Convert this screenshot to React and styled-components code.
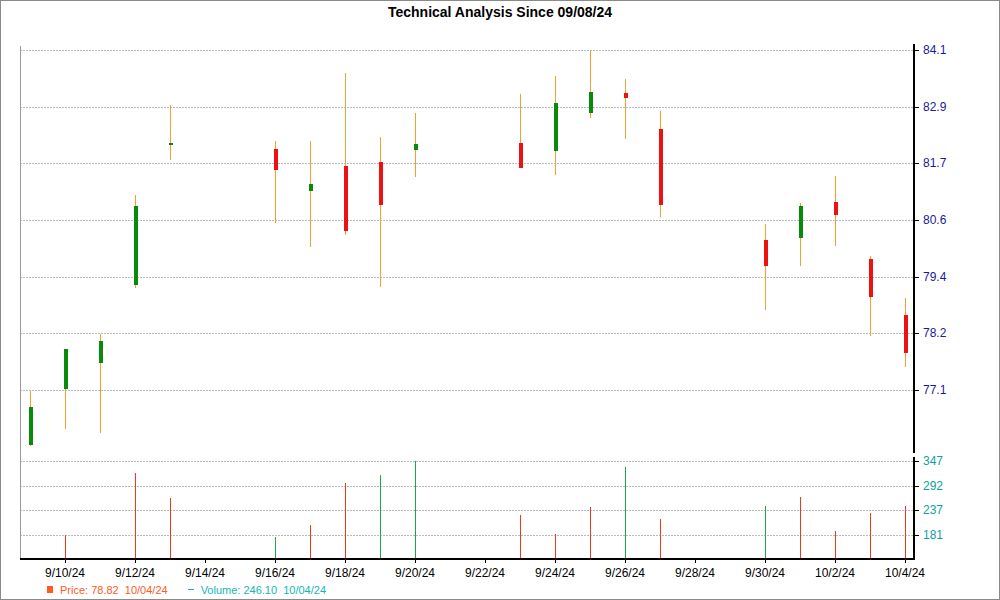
import React from "react";
import styled, { createGlobalStyle } from "styled-components";

const Global = createGlobalStyle`
  body { margin: 0; background: #fff; font-family: "Liberation Sans", Arial, sans-serif; }
`;

const Frame = styled.div`
  width: 1000px;
  height: 600px;
  box-sizing: border-box;
  border: 1px solid #8a8a8a;
  display: flex;
  flex-direction: column;
`;

const Title = styled.div`
  height: 20px;
  display: flex;
  align-items: center;
  justify-content: center;
  font-size: 14px;
  font-weight: bold;
  color: #000;
  padding-top: 1px;
`;

const Chart = styled.svg`
  display: block;
  width: 998px;
  height: 558px;
`;

const Legend = styled.div`
  height: 19px;
  display: flex;
  align-items: center;
  gap: 20px;
  padding-left: 46px;
  font-size: 11px;
`;

const LegendItem = styled.span`
  color: ${(p) => p.color};
  display: flex;
  align-items: center;
  gap: 7px;
`;

const Swatch = styled.span`
  width: 6px;
  height: 7px;
  background: #ff5a1f;
`;

const Dash = styled.span`
  width: 6px;
  height: 1px;
  background: #13b5b5;
`;

const UP = "#0a8a0a";
const DOWN = "#ee1111";
const WICK = "#f0a030";

const candles = [
  [30, 390, 445, 406, 444, UP],
  [65, 348, 428, 348, 388, UP],
  [100, 333, 432, 340, 362, UP],
  [135, 194, 287, 205, 284, UP],
  [170, 104, 159, 142, 144, UP],
  [275, 140, 222, 148, 169, DOWN],
  [310, 140, 246, 183, 190, UP],
  [345, 72, 234, 165, 230, DOWN],
  [380, 136, 286, 161, 204, DOWN],
  [415, 112, 176, 143, 149, UP],
  [520, 93, 167, 142, 167, DOWN],
  [555, 75, 174, 102, 150, UP],
  [590, 49, 117, 91, 112, UP],
  [625, 78, 138, 92, 97, DOWN],
  [660, 110, 216, 128, 204, DOWN],
  [765, 223, 309, 239, 265, DOWN],
  [800, 202, 265, 205, 237, UP],
  [835, 175, 245, 201, 214, DOWN],
  [870, 255, 335, 258, 296, DOWN],
  [905, 297, 366, 314, 352, DOWN],
];

const VUP = "#1aa84a";
const VDOWN = "#f03a1a";
const volumes = [
  [65, 534, VDOWN], [135, 472, VDOWN], [170, 497, VDOWN], [275, 536, VUP],
  [310, 524, VDOWN], [345, 482, VDOWN], [380, 474, VUP], [415, 460, VUP],
  [520, 514, VDOWN], [555, 533, VDOWN], [590, 506, VDOWN], [625, 466, VUP],
  [660, 518, VDOWN], [765, 505, VUP], [800, 496, VDOWN], [835, 530, VDOWN],
  [870, 512, VDOWN], [905, 505, VDOWN],
];

const priceTicks = [[84.1, 49], [82.9, 106], [81.7, 162], [80.6, 219], [79.4, 276], [78.2, 332], [77.1, 389]];
const volTicks = [[347, 460], [292, 485], [237, 509], [181, 534]];
const dates = ["9/10/24", "9/12/24", "9/14/24", "9/16/24", "9/18/24", "9/20/24", "9/22/24", "9/24/24", "9/26/24", "9/28/24", "9/30/24", "10/2/24", "10/4/24"];

export default function App() {
  return (
    <>
      <Global />
      <Frame>
        <Title>Technical Analysis Since 09/08/24</Title>
        <Chart viewBox="1 21 998 558" shapeRendering="crispEdges">
          {priceTicks.map(([v, y]) => (
            <g key={v}>
              <line x1="20" x2="914" y1={y} y2={y} stroke="#bbb" strokeDasharray="2 1" />
              <line x1="914" x2="919" y1={y} y2={y} stroke="#000" />
              <text x="923" y={y + 4} fontSize="12" fill="#1a1aa0" fontFamily="Liberation Sans">{v.toFixed(1)}</text>
            </g>
          ))}
          {volTicks.map(([v, y]) => (
            <g key={v}>
              <line x1="20" x2="914" y1={y} y2={y} stroke="#bbb" strokeDasharray="2 1" />
              <line x1="914" x2="919" y1={y} y2={y} stroke="#000" />
              <text x="923" y={y + 4} fontSize="12" fill="#10a0a0" fontFamily="Liberation Sans">{v}</text>
            </g>
          ))}
          <line x1="20.5" x2="20.5" y1="45" y2="557" stroke="#999" />
          <line x1="914" x2="914" y1="43" y2="452" stroke="#000" strokeWidth="2" />
          <line x1="914" x2="914" y1="456" y2="557" stroke="#000" strokeWidth="2" />
          {candles.map(([x, wt, wb, bt, bb, c]) => (
            <g key={x}>
              <line x1={x + 0.5} x2={x + 0.5} y1={wt} y2={wb} stroke={WICK} />
              <rect x={x - 1} y={bt} width="4" height={Math.max(bb - bt, 2)} fill={c} />
            </g>
          ))}
          {volumes.map(([x, y, c]) => (
            <rect key={x} x={x} y={y} width="1" height={557 - y} fill={c} />
          ))}
          <line x1="20" x2="915" y1="557.5" y2="557.5" stroke="#000" strokeWidth="2" />
          {dates.map((d, i) => (
            <g key={d}>
              <line x1={65.5 + i * 70} x2={65.5 + i * 70} y1="557" y2="562" stroke="#000" />
              <text x={65 + i * 70} y="576" fontSize="12" textAnchor="middle" fill="#000" fontFamily="Liberation Sans">{d}</text>
            </g>
          ))}
        </Chart>
        <Legend>
          <LegendItem color="#ff5a1f"><Swatch />Price: 78.82&nbsp;&nbsp;10/04/24</LegendItem>
          <LegendItem color="#13b5b5"><Dash />Volume: 246.10&nbsp;&nbsp;10/04/24</LegendItem>
        </Legend>
      </Frame>
    </>
  );
}
